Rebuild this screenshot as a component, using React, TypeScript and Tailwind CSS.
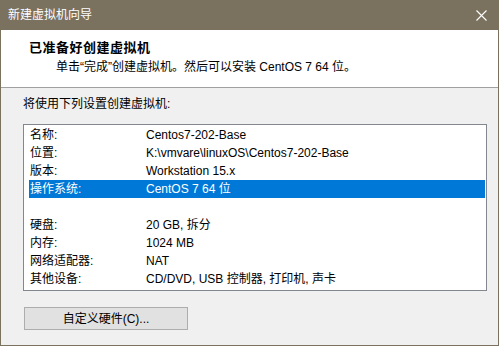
export default function App() {
  const rows: [string, string][] = [
    ["名称:", "Centos7-202-Base"],
    ["位置:", "K:\\vmvare\\linuxOS\\Centos7-202-Base"],
    ["版本:", "Workstation 15.x"],
    ["操作系统:", "CentOS 7 64 位"],
    ["", ""],
    ["硬盘:", "20 GB, 拆分"],
    ["内存:", "1024 MB"],
    ["网络适配器:", "NAT"],
    ["其他设备:", "CD/DVD, USB 控制器, 打印机, 声卡"],
  ]

  return (
    <div className="w-[499px] h-[346px] flex flex-col bg-[#f0f0f0] border-x border-b border-[#7b715f] text-[12px] leading-[16px] text-black font-['Liberation_Sans','Noto_Sans_CJK_SC',sans-serif] overflow-hidden">
      {/* title bar */}
      <div className="h-[30px] shrink-0 bg-[#7b715f] flex items-center justify-between pl-[7px] pr-[11px] text-white">
        <span>新建虚拟机向导</span>
        <svg width="11" height="11" viewBox="0 0 11 11">
          <path d="M0.5 0.5 L10.5 10.5 M10.5 0.5 L0.5 10.5" stroke="white" strokeWidth="1.1" />
        </svg>
      </div>

      {/* header */}
      <div className="h-[58px] shrink-0 bg-white border-b border-[#a0a0a0] pt-[10px]">
        <div className="pl-[28px] font-bold text-[13px] tracking-[0.5px]">已准备好创建虚拟机</div>
        <div className="pl-[55px] mt-[3px]">单击“完成”创建虚拟机。然后可以安装 CentOS 7 64 位。</div>
      </div>

      {/* body */}
      <div className="pt-[8px]">
        <div className="pl-[22px]">将使用下列设置创建虚拟机:</div>
        <div className="ml-[22px] mt-[12px] w-[464px] h-[167px] bg-white border border-[#828790] pt-[1px] pl-[5px] pr-[1px]">
          {rows.map(([name, value], i) => (
            <div
              key={i}
              className={`h-[18px] flex items-center pl-[1px] ${i === 3 ? "bg-[#0078d7] text-white" : ""}`}
            >
              <span className="w-[116px] shrink-0">{name}</span>
              <span className="whitespace-nowrap">{value}</span>
            </div>
          ))}
        </div>
        <button className="ml-[23px] mt-[16px] w-[164px] h-[23px] bg-[#e1e1e1] border border-[#adadad] flex items-center justify-center">
          自定义硬件(C)...
        </button>
      </div>
    </div>
  )
}
